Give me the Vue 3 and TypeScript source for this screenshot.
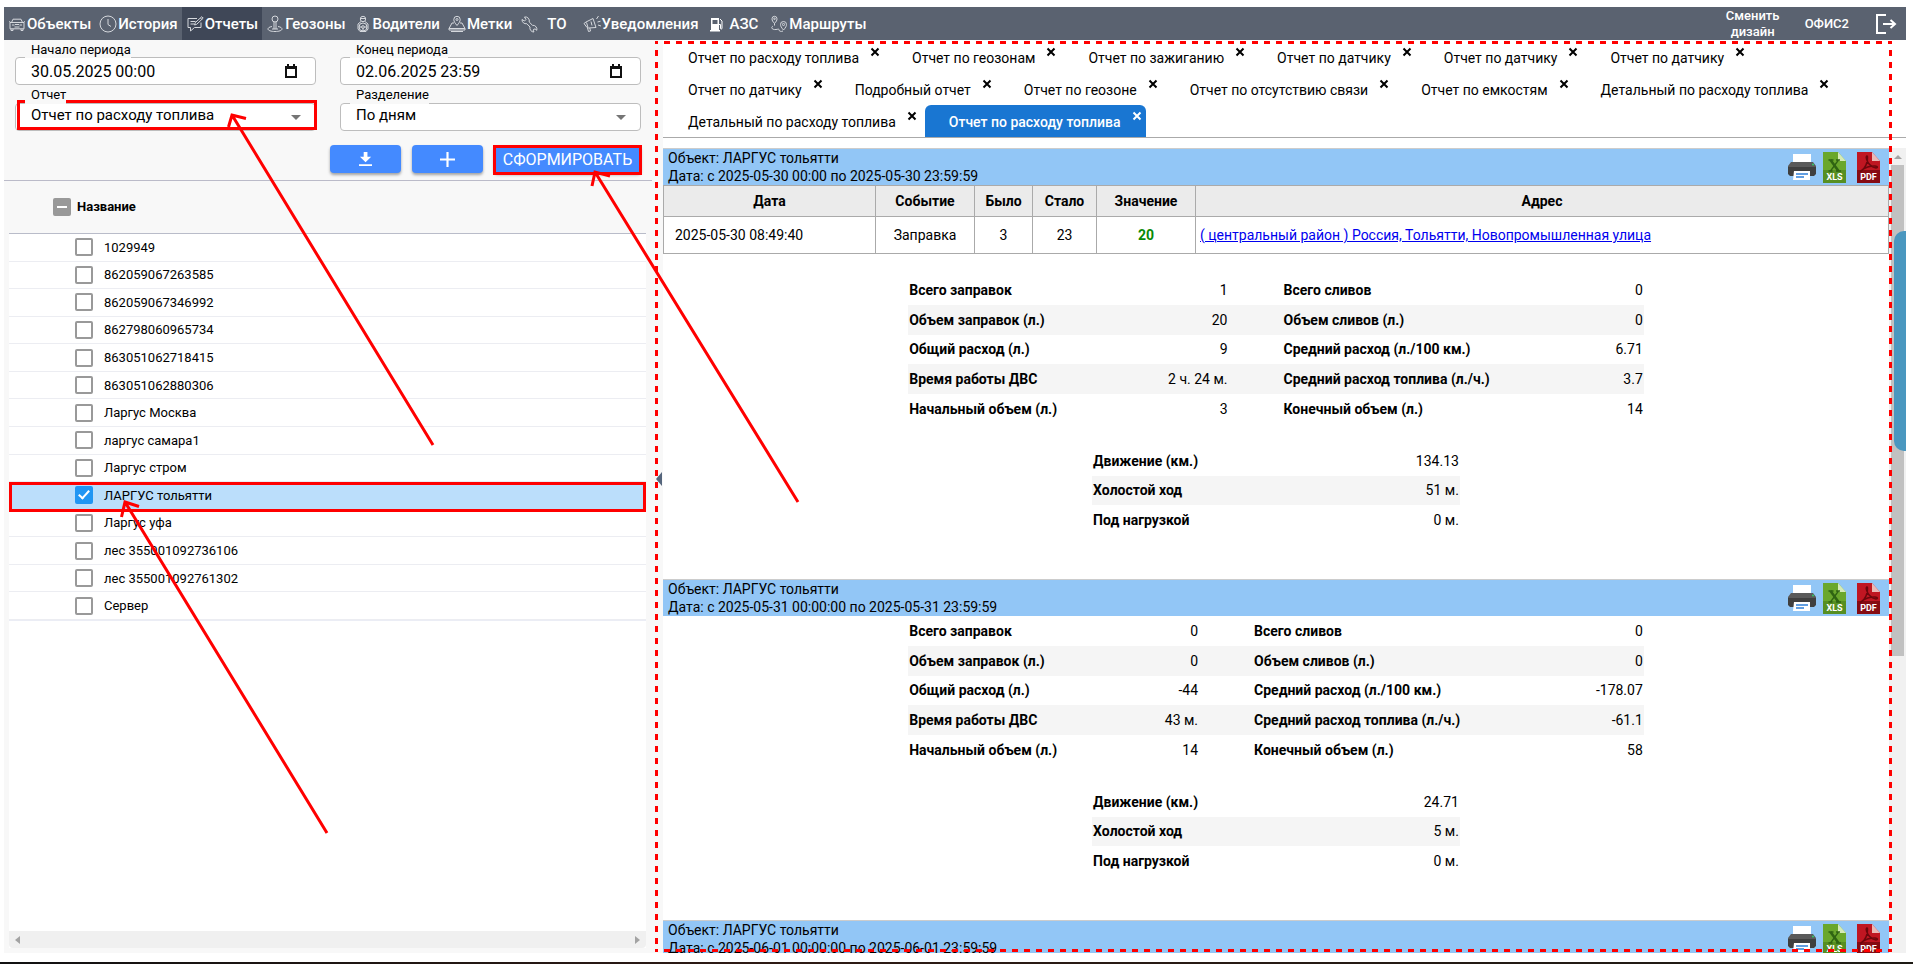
<script setup lang="ts">
import { ref } from 'vue'

interface NavItem { label: string; icon: string; space: string }
interface TreeUnit { name: string; checked: boolean }
interface StatRow { a: string; av: string; b: string; bv: string }
interface Report {
  period: string
  events: { date: string; kind: string; before: string; after: string; value: string; address: string }[]
  stats: StatRow[]
  motion: [string, string][]
  layout: string
}

const navItems: NavItem[] = [
  { label: 'Объекты', icon: 'car', space: '' },
  { label: 'История', icon: 'clock', space: '' },
  { label: 'Отчеты', icon: 'report', space: '' },
  { label: 'Геозоны', icon: 'pin', space: '' },
  { label: 'Водители', icon: 'driver', space: '' },
  { label: 'Метки', icon: 'marker', space: '' },
  { label: 'ТО', icon: 'wrench', space: 'wide' },
  { label: 'Уведомления', icon: 'horn', space: '' },
  { label: 'АЗС', icon: 'fuel', space: 'loose' },
  { label: 'Маршруты', icon: 'route', space: '' },
]
const activeNav = ref('Отчеты')

const dateFrom = ref('30.05.2025 00:00')
const dateTo = ref('02.06.2025 23:59')
const reportType = ref('Отчет по расходу топлива')
const split = ref('По дням')

const units = ref<TreeUnit[]>([
  '1029949', '862059067263585', '862059067346992', '862798060965734', '863051062718415',
  '863051062880306', 'Ларгус Москва', 'ларгус самара1', 'Ларгус стром', 'ЛАРГУС тольятти',
  'Ларгус уфа', 'лес 355001092736106', 'лес 355001092761302', 'Сервер',
].map((name) => ({ name, checked: name === 'ЛАРГУС тольятти' })))

const tabs = [
  'Отчет по расходу топлива', 'Отчет по геозонам', 'Отчет по зажиганию', 'Отчет по датчику',
  'Отчет по датчику', 'Отчет по датчику', 'Отчет по датчику', 'Подробный отчет', 'Отчет по геозоне',
  'Отчет по отсутствию связи', 'Отчет по емкостям', 'Детальный по расходу топлива',
  'Детальный по расходу топлива', 'Отчет по расходу топлива',
]
const activeTab = ref(13)

function stats(v: string[]): StatRow[] {
  return [
    { a: 'Всего заправок', av: v[0], b: 'Всего сливов', bv: v[1] },
    { a: 'Объем заправок (л.)', av: v[2], b: 'Объем сливов (л.)', bv: v[3] },
    { a: 'Общий расход (л.)', av: v[4], b: 'Средний расход (л./100 км.)', bv: v[5] },
    { a: 'Время работы ДВС', av: v[6], b: 'Средний расход топлива (л./ч.)', bv: v[7] },
    { a: 'Начальный объем (л.)', av: v[8], b: 'Конечный объем (л.)', bv: v[9] },
  ]
}
function motion(km: string, idle: string, load: string): [string, string][] {
  return [['Движение (км.)', km], ['Холостой ход', idle], ['Под нагрузкой', load]]
}

const reports: Report[] = [
  {
    period: 'с 2025-05-30 00:00 по 2025-05-30 23:59:59',
    events: [{
      date: '2025-05-30 08:49:40', kind: 'Заправка', before: '3', after: '23', value: '20',
      address: '( центральный район ) Россия, Тольятти, Новопромышленная улица',
    }],
    stats: stats(['1', '0', '20', '0', '9', '6.71', '2 ч. 24 м.', '3.7', '3', '14']),
    motion: motion('134.13', '51 м.', '0 м.'),
    layout: 'even',
  },
  {
    period: 'с 2025-05-31 00:00:00 по 2025-05-31 23:59:59',
    events: [],
    stats: stats(['0', '0', '0', '0', '-44', '-178.07', '43 м.', '-61.1', '14', '58']),
    motion: motion('24.71', '5 м.', '0 м.'),
    layout: 'shifted',
  },
  {
    period: 'с 2025-06-01 00:00:00 по 2025-06-01 23:59:59',
    events: [], stats: [], motion: [], layout: 'even',
  },
]
</script>

<template>
  <div class="page">
    <header class="topbar">
      <nav class="menu">
        <a
          v-for="item in navItems" :key="item.label" href="#" class="menu-item"
          :class="[item.space, { active: item.label === activeNav }]"
          @click.prevent="activeNav = item.label"
        >
          <svg class="menu-icon" viewBox="0 0 18 18" aria-hidden="true">
            <g v-if="item.icon === 'car'">
              <path d="M3.5 7.5 5 4.2h8l1.5 3.3M2 7.5h14v6.3H2zM3 13.8v1.7h2v-1.7M13 13.8v1.7h2v-1.7M1 6.5l1.5.8M17 6.5l-1.5.8M4 10h2.5M11.5 10H14M6.5 12h5M7 9.5h4" />
            </g>
            <g v-else-if="item.icon === 'clock'">
              <circle cx="9" cy="9" r="8" /><path d="M9 4v5.5l3 2" />
            </g>
            <g v-else-if="item.icon === 'report'">
              <path d="M11 3.5H2v9h2.5V16l4-3.5H15V7.500M4.500 6.500h5M4.500 9h3.500M8.500 10l.7-2.300 6.600-6 1.400 1.400-6.500 6.200zM14.500 3l1.300 1.300" />
            </g>
            <g v-else-if="item.icon === 'pin'">
              <circle cx="9" cy="4" r="3" /><path d="M8 7v7M10 7v7M6 11.500c-3 .5-4 1.500-4 2.500 0 1.500 3 2.500 7 2.500s7-1 7-2.500c0-1-1-2-4-2.500M6 14h6" />
            </g>
            <g v-else-if="item.icon === 'driver'">
              <circle cx="9" cy="4" r="2.700" /><path d="M6 3.500h6M7 6.500 4 9v5l2 2.500h6l2-2.500V9l-3-2.500" /><circle cx="9" cy="12" r="4" /><circle cx="9" cy="12" r="1.300" /><path d="M5 12h3M10 12h3M9 13v3" />
            </g>
            <g v-else-if="item.icon === 'marker'">
              <path d="M9 10.500C7 8 5.800 6.500 5.800 4.500a3.200 3.200 0 0 1 6.400 0c0 2-1.200 3.500-3.200 6z" /><circle cx="9" cy="4.500" r="1" /><path d="M6 8H4l-3 5.500h16L14 8h-2M1 13.500V15h16v-1.500M3 16.500h12" />
            </g>
            <g v-else-if="item.icon === 'wrench'">
              <path d="M2 4.500 4.500 6 6 4.500 4.500 2a4 4 0 0 1 4.700 5l3.300 3.300a4 4 0 0 1 4.300 5L15 13.800 13 15l1 2a4 4 0 0 1-4-5L6.800 8.700A4 4 0 0 1 2 4.500z" />
            </g>
            <g v-else-if="item.icon === 'horn'">
              <path d="M1 8.500 3 7l7-3.500 3 9-7.500.500L4 12.500zM4.500 13l1 3.500 2-.5-.7-3M3.500 7.500l1.500 5M14.500 7l3-.8M13.500 4l2-3M15 10l3 1M8 6.500l1 4" />
            </g>
            <g v-else-if="item.icon === 'fuel'" class="solid">
              <path d="M4 3h8v12h1v1.500H3V15h1zM5.500 5v4h5V5z" fill-rule="evenodd" /><path class="hose" d="M12 9.500h1.500V13c0 1.500 1.500 1.500 1.500 0V6l-2-2" />
            </g>
            <g v-else>
              <path d="M4.500 8.500C2.800 6.500 2 5.500 2 3.800a2.500 2.500 0 0 1 5 0c0 1.700-.8 2.700-2.500 4.700zM13.500 15C11.300 12.500 10.500 11 10.500 9.500a3 3 0 0 1 6 0c0 1.500-.8 3-3 5.500zM4.500 8.500v2M3 11c-3 2 0 4 3 3.500s3-.5 3 .5 2 2 4 1" /><circle cx="4.500" cy="3.800" r=".8" /><circle cx="13.500" cy="9.500" r="1.100" />
            </g>
          </svg>
          <span>{{ item.label }}</span>
        </a>
      </nav>
      <button type="button" class="design">Сменить дизайн</button>
      <a href="#" class="account">ОФИС2</a>
      <button type="button" class="logout" aria-label="Выйти">
        <svg viewBox="0 0 22 22"><path d="M11 2H2v18h9M8 11h12M15.500 7l4.500 4-4.500 4" /></svg>
      </button>
    </header>

    <div class="workspace">
      <aside class="side">
        <form class="filters" @submit.prevent>
          <div class="field">
            <label for="from">Начало периода</label>
            <div class="box">
              <input id="from" v-model="dateFrom" type="text">
              <svg class="calendar" viewBox="0 0 12 14"><path d="M1 3h10v10H1zM1 4h10M3 0v3M9 0v3" /></svg>
            </div>
          </div>
          <div class="field">
            <label for="to">Конец периода</label>
            <div class="box">
              <input id="to" v-model="dateTo" type="text">
              <svg class="calendar" viewBox="0 0 12 14"><path d="M1 3h10v10H1zM1 4h10M3 0v3M9 0v3" /></svg>
            </div>
          </div>
          <div class="field choice">
            <label for="type">Отчет</label>
            <div class="box">
              <select id="type" v-model="reportType"><option>Отчет по расходу топлива</option></select>
              <svg class="caret" viewBox="0 0 10 5"><path d="M0 0h10L5 5z" /></svg>
            </div>
          </div>
          <div class="field choice">
            <label for="split">Разделение</label>
            <div class="box">
              <select id="split" v-model="split"><option>По дням</option></select>
              <svg class="caret" viewBox="0 0 10 5"><path d="M0 0h10L5 5z" /></svg>
            </div>
          </div>
          <div class="actions">
            <button type="button" class="primary" aria-label="Скачать">
              <svg viewBox="0 0 14 16"><path d="M5 0h4v5h4l-6 6-6-6h4zM0 13h14v2H0z" /></svg>
            </button>
            <button type="button" class="primary" aria-label="Добавить">
              <svg viewBox="0 0 14 14"><path d="M6 0h2v6h6v2H8v6H6V8H0V6h6z" /></svg>
            </button>
            <button type="submit" class="primary submit">СФОРМИРОВАТЬ</button>
          </div>
        </form>

        <div class="tree">
          <label class="tree-head">
            <input type="checkbox" class="partial">
            <span>Название</span>
          </label>
          <ul class="tree-list">
            <li v-for="unit in units" :key="unit.name" :class="{ selected: unit.checked }">
              <label><input v-model="unit.checked" type="checkbox"><span>{{ unit.name }}</span></label>
            </li>
          </ul>
          <div class="hscroll">
            <svg viewBox="0 0 5 8"><path d="M5 0v8L0 4z" /></svg>
            <svg viewBox="0 0 5 8"><path d="M0 0v8l5-4z" /></svg>
          </div>
        </div>
        <button type="button" class="collapse" aria-label="Свернуть панель">
          <svg viewBox="0 0 6 14"><path d="M6 0v14L0 7z" /></svg>
        </button>
      </aside>

      <main class="content">
        <div class="tabs">
          <div v-for="(tab, i) in tabs" :key="i" class="tab" :class="{ current: i === activeTab }">
            <button type="button" class="tab-name" @click="activeTab = i">{{ tab }}</button>
            <button type="button" class="tab-close" aria-label="Закрыть">
              <svg viewBox="0 0 10 10"><path d="M1.500 1.500l7 7M8.500 1.500l-7 7" /></svg>
            </button>
          </div>
        </div>

        <div class="viewer">
          <div class="reports">
            <section v-for="report in reports" :key="report.period" class="report">
              <div class="report-head">
                <div class="report-title">
                  <div>Объект: ЛАРГУС тольятти</div>
                  <div>Дата: {{ report.period }}</div>
                </div>
                <button type="button" class="export printer" aria-label="Печать">
                  <svg viewBox="0 0 28 28">
                    <path fill="#fff" d="M5 1h18v10H5z" />
                    <path fill="#5a5a5a" d="M3 9h22l3 4v4H0v-4z" />
                    <path fill="#3f3f3f" d="M0 14h28v7l-2 2H2l-2-2z" />
                    <circle cx="25" cy="11.500" r="1" fill="#2fd06a" />
                    <path fill="#fff" d="M6 18h16v9H5z" />
                    <path stroke="#2f7fd6" stroke-width="1.500" d="M8 21h12M8 24h8" />
                  </svg>
                </button>
                <button type="button" class="export" aria-label="Скачать XLS">
                  <svg viewBox="0 0 23 31">
                    <path fill="#6aa72c" d="M0 0h15l8 9v22H0z" />
                    <path fill="#578f22" d="M0 18h23v13H0z" />
                    <path fill="#d5eab8" d="M15 0l8 9h-8z" />
                    <path fill="none" stroke="#2f6412" stroke-width="2.600" d="M7.500 8l8 11" />
                    <path fill="none" stroke="#2f6412" stroke-width="1.300" d="M15.500 8l-8 11M5.500 8h5M13 8h4M5.500 19h4M13 19h5" />
                    <text x="11.500" y="28">XLS</text>
                  </svg>
                </button>
                <button type="button" class="export pdf" aria-label="Скачать PDF">
                  <svg viewBox="0 0 23 31">
                    <path fill="#c01622" d="M0 0h15l8 9v22H0z" />
                    <path fill="#860b12" d="M0 18h23v13H0z" />
                    <path fill="#eab9b7" d="M15 0l8 9h-8z" />
                    <path fill="none" stroke="#6d060c" stroke-width="1.500" d="M4 19c4-2 7-9 6.500-14 0-2-2-1-1 2 1.500 5 5 8 9.500 9 2 0 2-2-1-2-5 0-10 1.500-13 4-1 1-2 2-1 1z" />
                    <text x="11.500" y="28">PDF</text>
                  </svg>
                </button>
              </div>

              <table v-if="report.events.length" class="events">
                <colgroup>
                  <col class="c-date"><col class="c-kind"><col class="c-before"><col class="c-after"><col class="c-value"><col>
                </colgroup>
                <thead>
                  <tr><th>Дата</th><th>Событие</th><th>Было</th><th>Стало</th><th>Значение</th><th>Адрес</th></tr>
                </thead>
                <tbody>
                  <tr v-for="event in report.events" :key="event.date">
                    <td class="date">{{ event.date }}</td>
                    <td>{{ event.kind }}</td>
                    <td>{{ event.before }}</td>
                    <td>{{ event.after }}</td>
                    <td class="gain">{{ event.value }}</td>
                    <td class="address"><a href="#">{{ event.address }}</a></td>
                  </tr>
                </tbody>
              </table>

              <table v-if="report.stats.length" class="stats" :class="[report.layout, { spaced: report.events.length }]">
                <tbody>
                  <tr v-for="row in report.stats" :key="row.a">
                    <th scope="row" class="first">{{ row.a }}</th>
                    <td class="mid">{{ row.av }}</td>
                    <th scope="row" class="second">{{ row.b }}</th>
                    <td>{{ row.bv }}</td>
                  </tr>
                </tbody>
              </table>

              <table v-if="report.motion.length" class="stats motion">
                <tbody>
                  <tr v-for="[name, value] in report.motion" :key="name">
                    <th scope="row">{{ name }}</th>
                    <td>{{ value }}</td>
                  </tr>
                </tbody>
              </table>
            </section>
          </div>
          <div class="vscroll">
            <svg viewBox="0 0 8 4"><path d="M4 0l4 4H0z" /></svg>
            <div class="thumb"></div>
          </div>
        </div>
        <div class="drawer-handle"></div>
      </main>
    </div>
    <footer class="strip"></footer>

    <svg class="notes" aria-hidden="true">
      <g class="dashed">
        <path d="M655 42.500H1892" />
        <path d="M655 950.500H1892" />
        <path d="M656.500 41V952" />
        <path d="M1890.500 41V952" />
      </g>
      <rect x="18.500" y="101.500" width="297" height="27" />
      <rect x="494.500" y="146.500" width="146" height="27" />
      <rect x="10.500" y="483.500" width="634" height="27" />
      <path d="M433 445 232 115M228.500 127 232 115l14 3.500" />
      <path d="M798 502 595 172M592 186l3-14 15 4" />
      <path d="M327 833 125 502M121.500 517l3.500-15 14 4.500" />
    </svg>
  </div>
</template>

<style>
html, body { background: #fff; }
</style>

<style scoped>
.page {
  position: relative;
  display: flex;
  flex-direction: column;
  box-sizing: border-box;
  height: 100vh;
  overflow: hidden;
  padding: 7px 0 0;
  font-family: Roboto, "Liberation Sans", sans-serif;
  font-size: 14px;
  color: #000;
}
button, input, select {
  margin: 0;
  padding: 0;
  border: 0;
  background: none;
  font: inherit;
  color: inherit;
}
a { color: inherit; text-decoration: none; }

.topbar {
  display: flex;
  align-items: center;
  height: 33px;
  margin: 0 7px 0 4px;
  background: #5a6270;
  color: #fff;
  font-weight: 500;
}
.menu { display: flex; height: 100%; flex: 1; }
.menu-item {
  display: flex;
  align-items: center;
  gap: 1px;
  padding: 0 4px;
  font-size: 15px;
  white-space: nowrap;
}
.menu-item.active { background: #3f4757; }
.menu-item.wide span { padding: 0 8px; }
.menu-item.loose span { padding: 0 4px; }
.menu-icon {
  width: 18px;
  height: 18px;
  fill: none;
  stroke: #d5d8dd;
  stroke-width: 1;
}
.menu-icon .solid { fill: #fff; stroke: none; }
.menu-icon .hose { fill: none; stroke: #fff; }
.design { width: 70px; margin-right: 17px; font-size: 13px; line-height: 16px; }
.account { margin-right: 26px; font-size: 13px; }
.logout { width: 22px; height: 22px; margin-right: 9px; }
.logout svg { display: block; fill: none; stroke: #fff; stroke-width: 2; }

.workspace {
  display: grid;
  grid-template-columns: 659fr 1243fr;
  flex: 1;
  min-height: 0;
  margin: 0 7px 9px 4px;
}
.side {
  position: relative;
  display: flex;
  flex-direction: column;
  min-height: 0;
  background: #f8f8f8;
}
.filters {
  display: grid;
  grid-template-columns: 1fr 1fr;
  column-gap: 24px;
  row-gap: 2px;
  margin-right: 11px;
  padding: 1px 11px 7px;
  border-bottom: 1px solid #bbbbc9;
}
.field { display: flex; flex-direction: column; align-items: flex-start; }
.field label {
  z-index: 1;
  height: 17px;
  margin: 0 0 -1px 10px;
  padding: 0 0 0 6px;
  background: #f8f8f8;
  font-size: 13px;
  line-height: 17px;
}
.field.choice label { line-height: 15px; }
.box {
  display: flex;
  align-items: center;
  box-sizing: border-box;
  width: 100%;
  height: 28px;
  padding: 0 14px 0 15px;
  border: 1px solid #bdbdbd;
  border-radius: 4px;
  background: #fff;
}
.box input, .box select {
  flex: 1;
  min-width: 0;
  appearance: none;
  font-size: 16px;
}
.box select { align-self: flex-start; height: 22px; font-size: 15px; }
.calendar { width: 12px; height: 14px; margin-right: 4px; fill: none; stroke: #111; stroke-width: 2; }
.caret { width: 10px; height: 5px; fill: #757575; }
.actions {
  grid-column: 1 / -1;
  display: flex;
  justify-content: flex-end;
  gap: 11px;
  padding-top: 12px;
}
.primary {
  display: grid;
  place-items: center;
  width: 71px;
  height: 28px;
  border-radius: 4px;
  background: #448aff;
  box-shadow: 0 2px 3px rgba(0, 0, 0, 0.35);
  color: #fff;
  font-size: 16px;
}
.primary svg { height: 15px; fill: #fff; }
.submit { width: 147px; }

.tree {
  display: flex;
  flex-direction: column;
  flex: 1;
  margin: 0 17px 5px 5px;
  background: #fff;
}
.tree-head {
  display: flex;
  align-items: center;
  gap: 6px;
  height: 53px;
  padding-left: 44px;
  padding-bottom: 1px;
  border-bottom: 1px solid #b9bcc9;
  box-sizing: border-box;
  background: #f8f8f8;
  font-size: 13px;
  font-weight: 700;
}
.tree input {
  appearance: none;
  box-sizing: border-box;
  width: 18px;
  height: 18px;
  border: 2px solid #999;
  border-radius: 2px;
  background: #fff;
}
.tree input.partial {
  background: linear-gradient(#fff, #fff) center / 10px 2px no-repeat, #999;
}
.tree input:checked { display: grid; place-items: center; border-color: #2196f3; background: #2196f3; }
.tree input:checked::after {
  content: "";
  width: 4px;
  height: 9px;
  margin-bottom: 3px;
  border: solid #fff;
  border-width: 0 2px 2px 0;
  rotate: 42deg;
}
.tree-list {
  display: grid;
  grid-auto-rows: 1fr;
  height: 386px;
  margin: 0;
  padding: 0;
  border-bottom: 1px solid #ebedf5;
  list-style: none;
}
.tree-list li { border-bottom: 1px solid #ecedf2; }
.tree-list li.selected { background: #bbdefb; }
.tree-list label {
  display: flex;
  align-items: center;
  gap: 11px;
  height: 100%;
  padding-left: 66px;
  font-size: 13px;
}
.hscroll {
  display: flex;
  align-items: center;
  justify-content: space-between;
  height: 17px;
  margin-top: auto;
  padding: 0 6px;
  border-radius: 0 0 4px 4px;
  background: #f0f0f0;
}
.hscroll svg { width: 5px; height: 8px; fill: #a3a3a3; }
.collapse { position: absolute; right: 1px; top: 432px; width: 6px; height: 14px; }
.collapse svg { display: block; fill: #55657c; }

.content {
  position: relative;
  display: flex;
  flex-direction: column;
  min-width: 0;
  min-height: 0;
}
.tabs {
  display: flex;
  flex-wrap: wrap;
  gap: 0 4px;
  margin-bottom: 10px;
  padding: 1px 0 0 1px;
  border-bottom: 1px solid #aaa;
}
.tab {
  display: flex;
  align-items: flex-start;
  gap: 11px;
  height: 32px;
  padding: 0 4px 0 24px;
}
.tab-name { font-size: 14px; line-height: 34px; }
.tab-close { width: 10px; height: 10px; margin-top: 6px; }
.tab-close svg { display: block; fill: none; stroke: currentColor; stroke-width: 2; }
.tab.current { border-radius: 6px 6px 0 0; background: #1976d2; color: #fff; font-weight: 500; }

.viewer { display: flex; flex: 1; min-height: 0; }
.reports { flex: 1; min-width: 0; overflow: hidden; }
.report { padding-bottom: 44px; }
.report-head {
  display: flex;
  align-items: center;
  height: 36px;
  padding-right: 9px;
  border-top: 1px solid #ccc;
  background: #92c6f6;
}
.report-title { flex: 1; padding-left: 5px; font-size: 14px; line-height: 18px; }
.export { width: 23px; height: 31px; margin-left: 11px; }
.export.printer { width: 28px; height: 28px; margin-right: -4px; }
.export svg { display: block; }
.export text {
  fill: #fff;
  font-size: 9px;
  font-weight: 700;
  text-anchor: middle;
}
.events {
  width: 100%;
  border-collapse: collapse;
  table-layout: fixed;
  line-height: 16px;
}
.events th, .events td { padding: 7px 4px; border: 1px solid #aaa; text-align: center; }
.events th { background: #ebebeb; }
.events td { padding: 10px 4px; }
.events .date { padding-left: 11px; text-align: left; }
.events .address { text-align: left; }
.events .address a { color: #00e; text-decoration: underline; }
.events .gain { color: #088a08; font-weight: 700; }
.c-date { width: 212px; }
.c-kind { width: 99px; }
.c-before { width: 58px; }
.c-after { width: 64px; }
.c-value { width: 99px; }

.stats {
  width: 60%;
  height: 149px;
  margin: 0 auto;
  border-collapse: collapse;
  table-layout: fixed;
}
.stats.spaced { margin-top: 21px; }
.stats th, .stats td { padding: 0 1px; white-space: nowrap; }
.stats th { text-align: left; }
.stats td { text-align: right; }
.stats tr:nth-child(even) { background: #f5f5f5; }
.stats .first { width: 30%; }
.stats .mid { width: 13%; }
.stats .second { width: 40%; padding-left: 55px; }
.stats.shifted .mid { width: 9%; }
.stats.motion { width: 30%; height: 89px; margin-top: 22px; }

.vscroll {
  display: flex;
  flex-direction: column;
  align-items: center;
  width: 17px;
  background: #f1f1f1;
}
.vscroll svg { width: 8px; height: 4px; margin: 7px 0 6px; fill: #a3a3a3; }
.thumb { width: 13px; height: 61%; background: #c1c1c1; }
.drawer-handle {
  position: absolute;
  top: 191px;
  right: 0;
  width: 12px;
  height: 220px;
  border-radius: 10px 0 0 10px;
  background: #4a97bf;
}
.strip { height: 2px; background: linear-gradient(90deg, #111, #2d1a14 40%, #1d1a14); }

.notes {
  position: absolute;
  inset: 0;
  width: 100%;
  height: 100%;
  fill: none;
  stroke: #f00;
  stroke-width: 3;
  pointer-events: none;
}
.dashed { stroke-dasharray: 6 6; stroke-dashoffset: 3; }
</style>
